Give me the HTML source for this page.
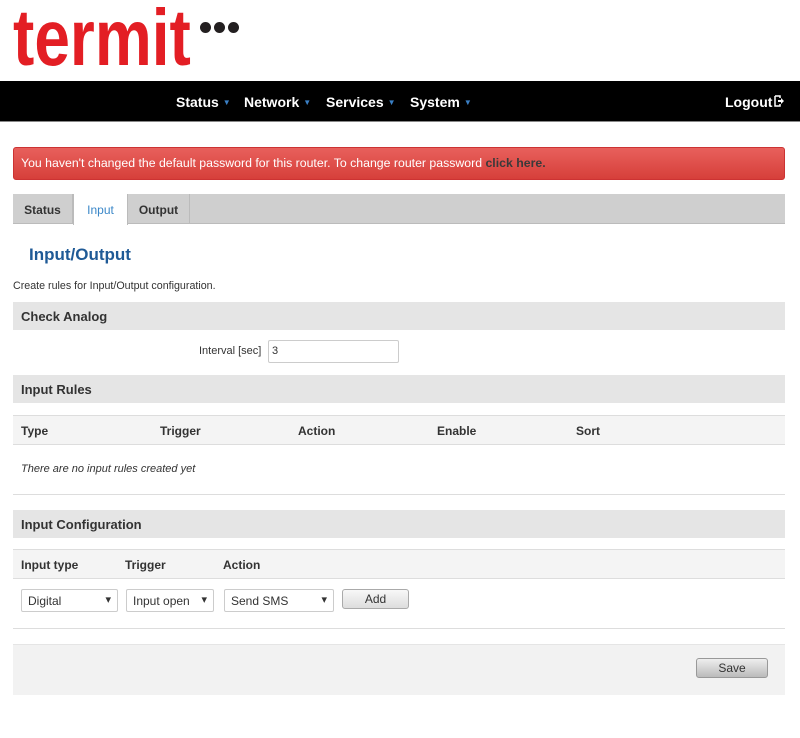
<!DOCTYPE html>
<html><head><meta charset="utf-8"><style>
*{margin:0;padding:0;box-sizing:border-box}
body{width:800px;height:738px;background:#fff;font-family:"Liberation Sans",Arial,sans-serif;position:relative;overflow:hidden;color:#333}
.a{position:absolute}
.logo{left:13px;top:-2px;font-size:80px;font-weight:bold;color:#e31e24;letter-spacing:0px;transform:scaleX(0.8);transform-origin:left top;line-height:1}
.dot{width:11px;height:11px;border-radius:50%;background:#231f20;top:22px}
.nav{left:0;top:81px;width:800px;height:41px;background:#000;border-bottom:1px solid #888}
.nav span{position:absolute;top:13px;color:#fff;font-weight:bold;font-size:14px}
.nav i{font-style:normal;color:#3a7fc4;font-size:8px;margin-left:4px;vertical-align:2px}
.alert{left:13px;top:147px;width:772px;height:33px;border-radius:3px;background:linear-gradient(#e8605c,#d63f3a);border:1px solid #c33;color:#fff;font-size:12.3px;padding:8px 7px}
.alert b{color:#3a3a3a}
.tabs{left:13px;top:194px;width:772px;height:30px;background:#cfcfcf;border-bottom:1px solid #bbb}
.tab{position:absolute;top:0;height:30px;font-size:12px;font-weight:bold;padding-top:9px;text-align:center;border-right:1px solid #bbb}
.h{left:13px;width:772px;height:28px;background:#e5e5e5;font-weight:bold;font-size:13px;padding:7px 8px}
.th{left:13px;width:772px;height:30px;background:#f4f4f4;border-top:1px solid #ddd;border-bottom:1px solid #ddd;font-size:12px;font-weight:bold}
.th span{position:absolute;top:8px}
.line{left:13px;width:772px;height:1px;background:#ddd}
.sel{height:23px;border:1px solid #ccc;border-radius:2px;font-size:12px;padding:4px 6px;background:#fff}
.sel:after{content:"▾";position:absolute;right:6px;top:3px;font-size:11px}
.btn{border:1px solid #aaa;border-radius:3px;background:linear-gradient(#f8f8f8,#ddd);font-size:12px;text-align:center}
</style></head><body>
<div class="a logo">termit</div>
<div class="a dot" style="left:200px"></div><div class="a dot" style="left:214px"></div><div class="a dot" style="left:228px"></div>
<div class="a nav">
<span style="left:176px">Status<i>▼</i></span>
<span style="left:244px">Network<i>▼</i></span>
<span style="left:326px">Services<i>▼</i></span>
<span style="left:410px">System<i>▼</i></span>
<span style="left:725px">Logout<svg width="10" height="12" viewBox="0 0 10 12" style="margin-left:2px"><path d="M1 1h5v2M1 1v10h5v-2" stroke="#fff" fill="none" stroke-width="1.5"/><path d="M4 5h3V3l3 3-3 3V7H4z" fill="#fff"/></svg></span>
</div>
<div class="a alert">You haven't changed the default password for this router. To change router password <b>click here.</b></div>
<div class="a tabs">
<div class="tab" style="left:0;width:60px">Status</div>
<div class="tab" style="left:60px;width:55px;background:#fff;color:#3a87c8;font-weight:normal;height:31px;border-left:1px solid #bbb">Input</div>
<div class="tab" style="left:115px;width:62px">Output</div>
</div>
<div class="a" style="left:29px;top:245px;font-size:17px;font-weight:bold;color:#1f5a96">Input/Output</div>
<div class="a" style="left:13px;top:280px;font-size:10.7px">Create rules for Input/Output configuration.</div>
<div class="a h" style="top:302px">Check Analog</div>
<div class="a" style="left:199px;top:345px;font-size:11px">Interval [sec]</div>
<div class="a" style="left:268px;top:340px;width:131px;height:23px;border:1px solid #ccc;border-radius:2px;font-size:11px;padding:4px 3px">3</div>
<div class="a h" style="top:375px">Input Rules</div>
<div class="a th" style="top:415px"><span style="left:8px">Type</span><span style="left:147px">Trigger</span><span style="left:285px">Action</span><span style="left:424px">Enable</span><span style="left:563px">Sort</span></div>
<div class="a" style="left:21px;top:463px;font-size:11px;font-style:italic">There are no input rules created yet</div>
<div class="a line" style="top:494px"></div>
<div class="a h" style="top:510px">Input Configuration</div>
<div class="a th" style="top:549px"><span style="left:8px">Input type</span><span style="left:112px">Trigger</span><span style="left:210px">Action</span></div>
<div class="a sel" style="left:21px;top:589px;width:97px">Digital</div>
<div class="a sel" style="left:126px;top:589px;width:88px">Input open</div>
<div class="a sel" style="left:224px;top:589px;width:110px">Send SMS</div>
<div class="a btn" style="left:342px;top:589px;width:67px;height:20px;padding-top:2px">Add</div>
<div class="a line" style="top:628px"></div>
<div class="a" style="left:13px;top:644px;width:772px;height:51px;background:#f2f2f2;border-top:1px solid #e5e5e5"></div>
<div class="a btn" style="left:696px;top:658px;width:72px;height:20px;padding-top:2px;background:linear-gradient(#eee,#bbb);border-color:#999">Save</div>
</body></html>
